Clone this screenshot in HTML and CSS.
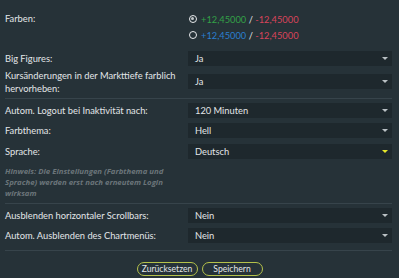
FILE: index.html
```html
<!DOCTYPE html>
<html lang="de">
<head>
<meta charset="utf-8">
<link rel="stylesheet" href="styles.css">
</head>
<body>
<div class="page">
  <div class="group group-first">
    <div class="row row-colors">
      <div class="label">Farben:</div>
      <div class="control radios">
        <div class="radio-line"><span class="radio checked"></span><span class="pos green">+12,45000</span><span class="sep"> / </span><span class="neg">-12,45000</span></div>
        <div class="radio-line"><span class="radio"></span><span class="pos blue">+12,45000</span><span class="sep"> / </span><span class="neg">-12,45000</span></div>
      </div>
    </div>
    <div class="row">
      <div class="label">Big Figures:</div>
      <div class="control"><div class="select"><span>Ja</span><span class="arrow"></span></div></div>
    </div>
    <div class="row row-tall">
      <div class="label">Kursänderungen in der Markttiefe farblich hervorheben:</div>
      <div class="control"><div class="select"><span>Ja</span><span class="arrow"></span></div></div>
    </div>
  </div>
  <div class="group group-second">
    <div class="row">
      <div class="label">Autom. Logout bei Inaktivität nach:</div>
      <div class="control"><div class="select"><span>120 Minuten</span><span class="arrow"></span></div></div>
    </div>
    <div class="row">
      <div class="label">Farbthema:</div>
      <div class="control"><div class="select"><span>Hell</span><span class="arrow"></span></div></div>
    </div>
    <div class="row">
      <div class="label">Sprache:</div>
      <div class="control"><div class="select"><span>Deutsch</span><span class="arrow active"></span></div></div>
    </div>
    <div class="hint">Hinweis: Die Einstellungen (Farbthema und Sprache) werden erst nach erneutem Login wirksam</div>
  </div>
  <div class="group group-third">
    <div class="row">
      <div class="label">Ausblenden horizontaler Scrollbars:</div>
      <div class="control"><div class="select"><span>Nein</span><span class="arrow"></span></div></div>
    </div>
    <div class="row">
      <div class="label">Autom. Ausblenden des Chartmenüs:</div>
      <div class="control"><div class="select"><span>Nein</span><span class="arrow"></span></div></div>
    </div>
  </div>
  <div class="buttons">
    <button class="btn">Zurücksetzen</button>
    <button class="btn">Speichern</button>
  </div>
</div>
</body>
</html>
```
FILE: styles.css
```css
html, body {
  margin: 0;
  padding: 0;
  background: #263238;
}
body {
  width: 399px;
  height: 278px;
  overflow: hidden;
  font-family: Lato, "Liberation Sans", sans-serif;
  font-size: 9.3px;
  color: #e3e6e8;
}
.page {
  padding: 11px 7px 0 5px;
}
.group {
  border-bottom: 1px solid #37444b;
}
.group-first {
  padding-bottom: 3px;
}
.group-second {
  padding-top: 1.5px;
  padding-bottom: 3.5px;
}
.group-third {
  padding-top: 1.5px;
  padding-bottom: 4px;
}
.row {
  display: flex;
  align-items: center;
  height: 20.5px;
}
.row-colors {
  align-items: flex-start;
  height: 32px;
  margin-bottom: 5px;
}
.row-tall {
  height: 26px;
}
.label {
  width: 183px;
  flex: none;
  line-height: 13px;
}
.row-colors .label {
  line-height: 16px;
}
.row-tall .label {
  width: 175px;
  margin-right: 8px;
}
.control {
  flex: 1;
}
.radios {
  display: flex;
  flex-direction: column;
}
.radio-line {
  display: flex;
  align-items: center;
  height: 16px;
  padding-left: 1px;
}
.radio {
  box-sizing: border-box;
  width: 8px;
  height: 8px;
  border: 1.5px solid #e8eaec;
  border-radius: 50%;
  margin-right: 4px;
  position: relative;
}
.radio.checked::after {
  content: "";
  position: absolute;
  left: 1px;
  top: 1px;
  width: 3px;
  height: 3px;
  border-radius: 50%;
  background: #c2c8cb;
}
.green { color: #33a147; }
.blue { color: #2a7fd0; }
.neg { color: #d9445b; }
.sep { color: #e3e6e8; white-space: pre; }
.select {
  background: #1e282d;
  height: 15px;
  display: flex;
  align-items: center;
  justify-content: space-between;
  padding: 0 4px 0 7px;
}
.arrow {
  width: 0;
  height: 0;
  border-left: 3.5px solid transparent;
  border-right: 3.5px solid transparent;
  border-top: 3.5px solid #b9c0c4;
}
.arrow.active {
  border-top-color: #e6e82a;
}
.hint {
  color: #6b757a;
  font-family: "Open Sans", "Liberation Sans", sans-serif;
  font-style: italic;
  font-weight: bold;
  font-size: 7.8px;
  line-height: 11px;
  width: 160px;
  padding-top: 4.5px;
}
.buttons {
  display: flex;
  justify-content: center;
  gap: 4px;
  padding-top: 11px;
  padding-left: 2px;
}
.btn {
  box-sizing: border-box;
  width: 61px;
  font-family: Lato, "Liberation Sans", sans-serif;
  font-size: 8.6px;
  color: #e3e6e8;
  background: #263238;
  border: 1.5px solid #b5c24a;
  border-radius: 7px;
  height: 14px;
  padding: 0;
  line-height: 11px;
  white-space: nowrap;
}
```
